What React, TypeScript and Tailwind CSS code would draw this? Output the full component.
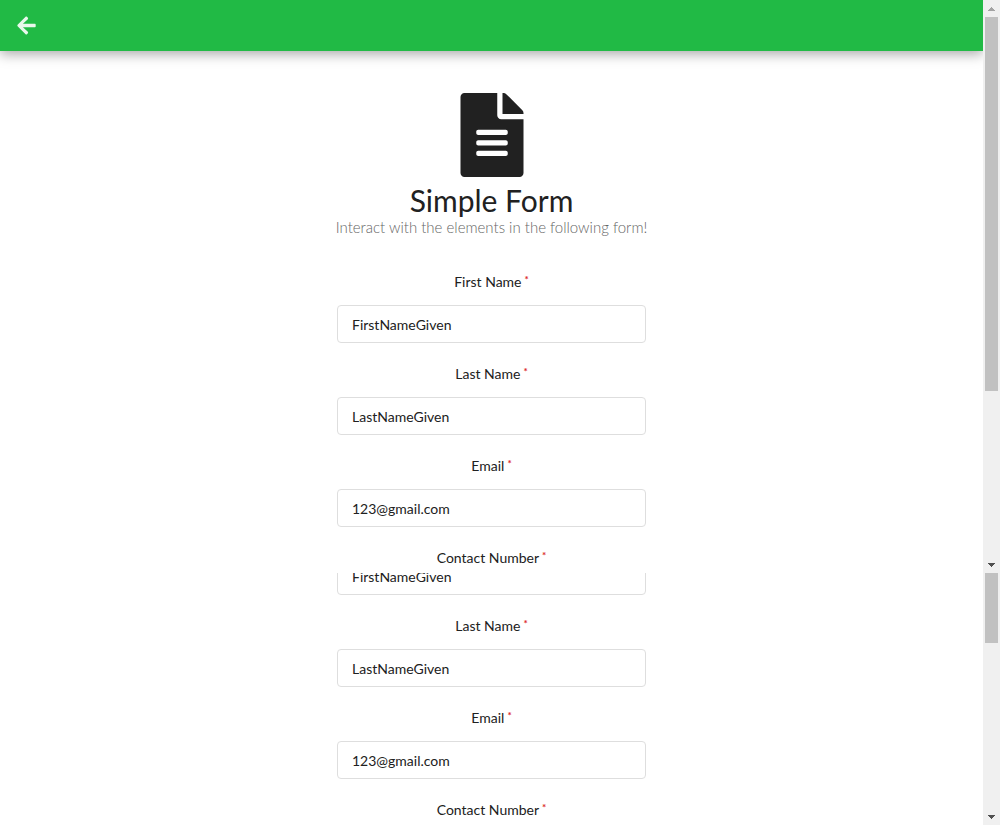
import { FaArrowLeft, FaFileAlt } from "react-icons/fa";

type FieldData = { label: string; type: string; value: string };

const firstName: FieldData = { label: "First Name", type: "text", value: "FirstNameGiven" };
const lastName: FieldData = { label: "Last Name", type: "text", value: "LastNameGiven" };
const email: FieldData = { label: "Email", type: "email", value: "123@gmail.com" };

function FieldLabel({ id, text }: { id?: string; text: string }) {
  return (
    <label
      htmlFor={id}
      className="flex h-5 justify-center gap-[3px] text-[14px] leading-5 text-[#212121]"
    >
      {text}
      <span className="text-[10px] leading-[14px] font-bold text-[#db2828]">*</span>
    </label>
  );
}

function TextField({ id, field, hideLabel }: { id: string; field: FieldData; hideLabel?: boolean }) {
  return (
    <div className="flex shrink-0 flex-col gap-[13px]">
      {!hideLabel && <FieldLabel id={id} text={field.label} />}
      <input
        id={id}
        type={field.type}
        aria-label={hideLabel ? field.label : undefined}
        defaultValue={field.value}
        className="h-[38px] w-full rounded border border-[#dedede] bg-white px-[14px] pt-px text-[14px] text-[#212121] outline-none focus:border-[#85b7d9]"
      />
    </div>
  );
}

function Triangle({ up }: { up?: boolean }) {
  return (
    <div className="flex h-[17px] shrink-0 items-center justify-center">
      <svg viewBox="0 0 7 4" className="h-1 w-[7px]" shapeRendering="crispEdges" aria-hidden="true">
        {up ? (
          <path d="M3 0h1v1h1v1h1v1h1v1H0V3h1V2h1V1h1z" fill="#a3a3a3" />
        ) : (
          <path d="M0 0h7v1H6v1H5v1H4v1H3V3H2V2H1V1H0z" fill="#505050" />
        )}
      </svg>
    </div>
  );
}

export default function App() {
  return (
    <div className="flex h-screen flex-col overflow-hidden bg-white font-['Lato',sans-serif]">
      <section className="flex shrink-0">
        <div className="flex min-w-0 flex-1 flex-col">
          <header className="flex h-[51px] items-center bg-[#21ba45] px-4 shadow-[0_3px_12px_rgba(0,0,0,0.35)]">
            <button type="button" aria-label="Back" className="text-white/90">
              <FaArrowLeft size={21} />
            </button>
          </header>
          <main className="flex flex-col items-center pt-[42px] pb-[5px]">
            <FaFileAlt size={84} className="text-[#212121]" aria-hidden="true" />
            <h1 className="mt-1.5 text-[30px] leading-[34px] text-[#212121]">Simple Form</h1>
            <p className="text-[15px] leading-5 font-light text-[#666]">
              Interact with the elements in the following form!
            </p>
            <form className="mt-[35px] flex w-[309px] flex-col gap-[21px]">
              <TextField id="first-name" field={firstName} />
              <TextField id="last-name" field={lastName} />
              <TextField id="email" field={email} />
              <FieldLabel text="Contact Number" />
            </form>
          </main>
        </div>
        <div className="flex w-[17px] flex-col bg-[#f0f0f0]" aria-hidden="true">
          <Triangle up />
          <div className="flex-1 px-0.5">
            <div className="h-[374px] bg-[#c1c1c1]" />
          </div>
          <Triangle />
        </div>
      </section>

      <section className="flex min-h-0 flex-1">
        <div className="flex min-w-0 flex-1 flex-col items-center justify-end overflow-hidden pb-[5px]">
          <form className="flex w-[309px] shrink-0 flex-col gap-[21px]">
            <TextField id="first-name-lower" field={firstName} hideLabel />
            <TextField id="last-name-lower" field={lastName} />
            <TextField id="email-lower" field={email} />
            <FieldLabel text="Contact Number" />
          </form>
        </div>
        <div className="flex w-[17px] flex-col bg-[#f0f0f0]" aria-hidden="true">
          <div className="flex-1 px-0.5">
            <div className="h-[70px] bg-[#c1c1c1]" />
          </div>
          <Triangle />
        </div>
      </section>
    </div>
  );
}
